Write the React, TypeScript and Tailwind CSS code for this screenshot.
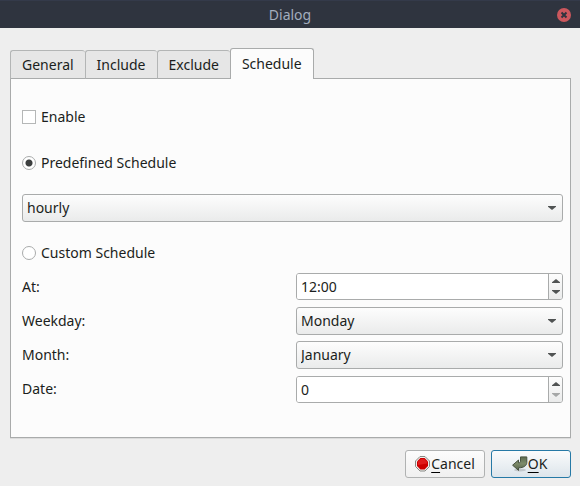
import { useState, type ReactNode } from "react";

const border = "border border-[#a9abab]";
const raised = "bg-linear-to-b from-[#fdfdfd] to-[#eaebeb]";

function Arrow({ up = false, faded = false }: { up?: boolean; faded?: boolean }) {
  return (
    <svg
      width="8"
      height="4"
      viewBox="0 0 8 4"
      aria-hidden="true"
      className={faded ? "fill-[#a5a7a7]" : "fill-[#505353]"}
    >
      <path d={up ? "M4 0L8 3.3V4H0V3.3Z" : "M0 0H8V.7L4 4L0 .7Z"} />
    </svg>
  );
}

function Combo({ id, label, options }: { id: string; label?: string; options: string[] }) {
  return (
    <div className="relative w-full">
      <select
        id={id}
        aria-label={label}
        className={`${border} ${raised} block h-7 w-full appearance-none rounded-[3px] pr-6 pl-1 outline-none`}
      >
        {options.map((option) => (
          <option key={option}>{option}</option>
        ))}
      </select>
      <span className="pointer-events-none absolute inset-y-0 right-[7px] flex items-center">
        <Arrow />
      </span>
    </div>
  );
}

function Spin({ id, value, atMinimum = false }: { id: string; value: string; atMinimum?: boolean }) {
  return (
    <div className={`${border} flex h-[27px] w-full overflow-hidden rounded-[3px] bg-white`}>
      <input id={id} type="text" defaultValue={value} className="min-w-0 flex-1 bg-white pl-1 outline-none" />
      <div className={`${raised} flex w-[14px] shrink-0 flex-col border-l border-[#a9abab]`}>
        <button type="button" aria-label="Increase" className="flex flex-1 items-end justify-center pb-[3px]">
          <Arrow up />
        </button>
        <button
          type="button"
          aria-label="Decrease"
          disabled={atMinimum}
          className="flex flex-1 items-start justify-center pt-1"
        >
          <Arrow faded={atMinimum} />
        </button>
      </div>
    </div>
  );
}

function Field({ id, label, align, children }: { id: string; label: string; align: string; children: ReactNode }) {
  return (
    <div className={`grid h-7 grid-cols-2 gap-[7px] ${align}`}>
      <label htmlFor={id} className="leading-7">
        {label}
      </label>
      {children}
    </div>
  );
}

function Choice({ label, checked, onChange }: { label: string; checked: boolean; onChange: () => void }) {
  return (
    <label className="flex h-5 items-center gap-[5px]">
      <input
        type="radio"
        name="schedule"
        checked={checked}
        onChange={onChange}
        className={`${border} size-[14px] appearance-none rounded-full bg-white checked:bg-[radial-gradient(circle,#3c3f3f_3px,#ffffff_4px)]`}
      />
      {label}
    </label>
  );
}

const tabs = ["General", "Include", "Exclude", "Schedule"];

export default function App() {
  const [custom, setCustom] = useState(false);

  return (
    <div className="flex min-h-screen flex-col bg-[#eeeeee] font-['Noto_Sans',sans-serif] text-[14px] leading-5 text-[#1b1e20]">
      <header className="relative flex h-7 shrink-0 items-center justify-center border-t border-[#343a4a] bg-[#2f343f] text-[#a3adbd]">
        <h1>Dialog</h1>
        <button type="button" aria-label="Close" className="absolute right-[9px]">
          <svg width="14" height="14" viewBox="0 0 14 14">
            <circle cx="7" cy="7" r="7" fill="#cc575d" />
            <path d="M4.5 4.5L9.5 9.5M9.5 4.5L4.5 9.5" stroke="#2f343f" strokeWidth="2" />
          </svg>
        </button>
      </header>

      <main className="flex flex-1 flex-col px-[10px] pt-5 pr-[9px] pb-2">
        <div role="tablist" className="z-10 -mb-px flex items-end">
          {tabs.map((tab) => (
            <button
              key={tab}
              type="button"
              role="tab"
              aria-selected={tab === "Schedule"}
              className={
                tab === "Schedule"
                  ? "h-[31px] rounded-t-[3px] border border-b-0 border-[#a9abab] bg-[#fcfcfc] px-[11px] pb-px"
                  : "h-[29px] rounded-t-[3px] border border-r-0 border-[#b3b5b5] border-b-[#a9abab] bg-[#e6e6e6] px-[11px]"
              }
            >
              {tab}
            </button>
          ))}
        </div>

        <section
          role="tabpanel"
          aria-label="Schedule"
          className={`${border} flex flex-1 flex-col bg-[#fcfcfc] px-[11px] pt-7 pr-[7px] pb-8 shadow-[0_1px_0_#dcdcdc]`}
        >
          <label className="flex h-5 items-center gap-[5px]">
            <input
              type="checkbox"
              className="size-[14px] appearance-none border border-[#b5b7b7] bg-white checked:bg-[#505353]"
            />
            Enable
          </label>
          <div className="pt-[26px] pb-[21px]">
            <Choice label="Predefined Schedule" checked={!custom} onChange={() => setCustom(false)} />
          </div>
          <Combo id="predefined" label="Predefined Schedule" options={["hourly", "daily", "weekly", "monthly"]} />
          <div className="pt-[21px] pb-[10px]">
            <Choice label="Custom Schedule" checked={custom} onChange={() => setCustom(true)} />
          </div>
          <div className="flex flex-col gap-[6px]">
            <Field id="at" label="At:" align="items-start">
              <Spin id="at" value="12:00" />
            </Field>
            <Field id="weekday" label="Weekday:" align="items-start">
              <Combo id="weekday" options={["Monday", "Tuesday", "Wednesday", "Thursday", "Friday", "Saturday", "Sunday"]} />
            </Field>
            <Field id="month" label="Month:" align="items-start">
              <Combo id="month" options={["January", "February", "March", "April", "May", "June", "July", "August", "September", "October", "November", "December"]} />
            </Field>
            <Field id="date" label="Date:" align="items-end">
              <Spin id="date" value="0" atMinimum />
            </Field>
          </div>
        </section>

        <footer className="flex justify-end gap-[6px] pt-3">
          <button
            type="button"
            className="flex h-7 w-20 items-center justify-center rounded-[3px] border border-[#b0b2b2] bg-linear-to-b from-[#fcfcfc] to-[#f0f0f0]"
          >
            <svg width="16" height="16" viewBox="0 0 16 16" aria-hidden="true">
              <path d="M5 .5H10L14.5 5V10.5L10 15H5L.5 10.5V5Z" fill="#eeeeec" stroke="#888a85" />
              <path d="M5.4 2H9.6L13 5.4V10L9.6 13.5H5.4L2 10V5.4Z" fill="#cc0000" />
              <path d="M5.8 3H9.2L12 5.8V7.5L3 9V5.8Z" fill="#e01b1b" />
            </svg>
            <span>
              <span className="underline decoration-black underline-offset-3">C</span>ancel
            </span>
          </button>
          <button
            type="button"
            className="flex h-7 w-20 items-center justify-center rounded-[3px] border border-[#2679a6] bg-linear-to-b from-[#fafbfc] to-[#dde5eb] pr-[3px]"
          >
            <svg width="16" height="16" viewBox="0 0 16 16" aria-hidden="true">
              <defs>
                <linearGradient id="enter" x1="0" y1="0" x2="0" y2="1">
                  <stop offset="0" stopColor="#5d6b50" />
                  <stop offset="0.5" stopColor="#7d8b6a" />
                  <stop offset="1" stopColor="#56634a" />
                </linearGradient>
              </defs>
              <ellipse cx="8" cy="14" rx="6" ry="1.5" fill="#000000" opacity="0.15" />
              <path
                d="M8.5 .9H14.8V6.5C14.8 9.5 12 11.8 6.5 11.8V14.4L.6 9.2L6.5 4V6.8C8 6.8 8.5 6.3 8.5 5Z"
                fill="url(#enter)"
                stroke="#485340"
                strokeLinejoin="round"
              />
            </svg>
            <span>
              <span className="underline decoration-black underline-offset-3">O</span>K
            </span>
          </button>
        </footer>
      </main>
    </div>
  );
}
